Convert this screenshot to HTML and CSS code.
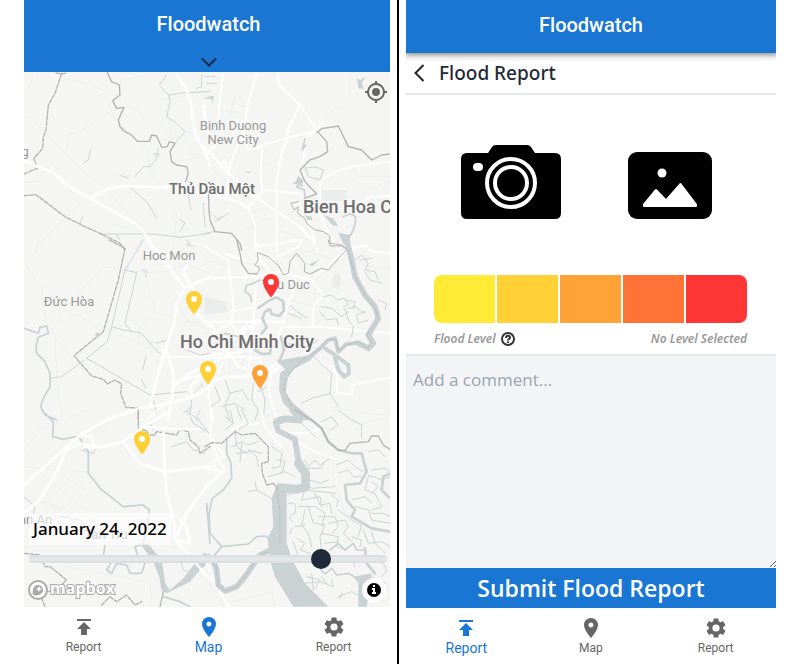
FILE: index.html
```html
<!DOCTYPE html>
<html lang="en">
<head>
<meta charset="utf-8">
<meta name="viewport" content="width=device-width, initial-scale=1">
<title>Floodwatch</title>
<link rel="stylesheet" href="styles.css">
</head>
<body>
<svg class="sprite" aria-hidden="true">
  <symbol id="i-upload" viewBox="0 0 24 24"><path d="M5 4v2h14V4H5zm0 10h4v6h6v-6h4l-7-7-7 7z"/></symbol>
  <symbol id="i-place" viewBox="0 0 24 24"><path d="M12 2C8.130 2 5 5.130 5 9c0 5.250 7 13 7 13s7-7.750 7-13c0-3.870-3.130-7-7-7zm0 9.500a2.500 2.500 0 1 1 0-5 2.500 2.500 0 0 1 0 5z"/></symbol>
  <symbol id="i-gear" viewBox="0 0 24 24"><path d="M19.140 12.940c.04-.3.06-.61.06-.94 0-.32-.02-.64-.07-.94l2.030-1.580a.49.49 0 0 0 .12-.61l-1.920-3.320a.49.49 0 0 0-.59-.22l-2.390.96a7 7 0 0 0-1.620-.94l-.36-2.540a.48.48 0 0 0-.48-.41h-3.840a.47.47 0 0 0-.47.41l-.36 2.540c-.59.24-1.130.57-1.620.94l-2.390-.96a.48.48 0 0 0-.59.22L2.740 8.870a.47.47 0 0 0 .12.61l2.030 1.580a6 6 0 0 0 0 1.880l-2.030 1.580a.49.49 0 0 0-.12.61l1.920 3.320c.12.22.37.29.59.22l2.390-.96c.5.38 1.030.7 1.620.94l.36 2.540c.05.24.24.41.48.41h3.840c.24 0 .44-.17.47-.41l.36-2.540a7 7 0 0 0 1.620-.94l2.390.96c.22.08.47 0 .59-.22l1.920-3.320a.47.47 0 0 0-.12-.61zM12 15.600a3.600 3.600 0 1 1 0-7.200 3.600 3.600 0 0 1 0 7.200z"/></symbol>
  <symbol id="pin" viewBox="0 0 16 24"><path d="M8 0a8 8 0 0 0-8 8c0 6 8 15.500 8 15.500S16 14 16 8a8 8 0 0 0-8-8z"/><circle cx="8" cy="8" r="3" fill="#fff"/></symbol>
</svg>
<main class="board">
  <section class="phone phone-map" aria-label="Map screen">
    <div class="screen">
      <header class="bar bar-tall">
        <h1>Floodwatch</h1>
        <button class="expand" type="button" aria-label="Expand"><svg viewBox="0 0 16 9"><path d="M1 1l7 7 7-7"/></svg></button>
      </header>
      <div class="map">
        <svg class="map-art" viewBox="21 72 375 535" preserveAspectRatio="xMidYMid slice" role="img" aria-label="Map of Ho Chi Minh City">
          <g transform="translate(20 70) scale(.3333)">
            <path class="minor" d="M12 140L40 150 110 225 200 315 240 335 370 485M12 337L50 335 75 300 140 235 145 192 175 188 270 125M195 40L255 62 285 150 340 200 385 240 385 285 440 390 470 430 460 540M400 8L300 35 320 105 380 140 515 230M210 385L170 410 50 530M500 270L570 255M515 265L570 220M12 80L30 50 40 8M130 25L195 40M440 95L460 250M430 90L570 60M250 440L270 460 335 475M350 462L370 500 350 540"/>
            <path class="creek" d="M440 15L418 45 445 75 450 95 440 140 470 160 495 185 465 220M445 75L490 68 570 65M415 235L410 265 390 290 370 290 345 320M400 250L420 255M300 315L325 325M330 350L345 365 380 395 410 445M240 492L400 492 480 502 570 490M180 465L187 440M478 448L495 458 480 485M505 375L512 420M550 400L555 470M500 520L520 530M190 280L205 270 212 240M290 495L300 510M545 15V50L530 55M560 85l12-4"/>
            <path class="edge" d="M262 8L275 35 298 45 300 75 278 92 290 115 312 112 295 150 300 170 315 185 335 195 352 214 388 214 395 195 410 198 425 232 442 230 448 215 465 220 450 245 455 275 470 285 500 290 505 310 497 335"/>
            <path class="edge dash" d="M125 10L105 70 85 105 78 180 70 200 68 235 42 265 52 295 12 312M108 8Q125 15 140 8M12 377L48 374 95 410 135 440 190 468 240 490 300 520 315 540"/>
            <path class="road" d="M12 272L100 308 140 345 210 385 280 425 350 462 385 505 405 540M210 385L265 355 310 348 450 353 568 375M470 15L495 50 512 90 518 150 530 200 555 245 570 290M550 110L560 170"/>
          </g>
          <g transform="translate(205 70) scale(.3333)">
            <rect x="345" y="360" width="80" height="32" fill="#ebecec"/>
            <path class="minor" d="M355 135L415 105 432 80 432 8M170 290L225 265M440 290L460 320 555 320M60 90L120 110M50 120L110 130M90 75L75 140M0 280L60 330 150 300M110 440L215 400M40 520L200 440M215 480L345 520M30 300L15 400M440 390L555 330"/>
            <path class="road2" d="M218 8L222 45 285 105 335 180 355 155M285 105L248 180 248 205 170 225 168 330 172 360M335 180L248 205 230 250 215 330 215 540M335 180L298 205 295 270M0 230L60 300 150 380 230 435 280 465 330 520M345 440L345 335 380 310 440 290 555 275M55 8L45 80 40 150 55 200 0 260M155 8L130 100 110 210 135 240 168 230M70 300L100 220M65 380L75 280M0 370L100 395 130 415 150 460 150 540M130 410L170 365M180 360L290 372M345 430L360 470 400 540M460 400L500 380 555 378M150 530L280 510M0 170L30 230M60 270L45 290 65 290 60 270M280 400L310 440 335 540M400 420L450 400"/>
            <path class="creek" d="M0 20h30M5 40h30M0 85L25 80 22 98M120 305L135 308M25 435L40 450 70 430M30 455L50 440M0 490L25 485M300 290L310 320 345 330 355 300 330 290 300 295"/>
            <path class="river" d="M268 340L290 335 275 350 298 360 300 382M300 205L292 240 302 225M415 440Q440 425 452 440 452 470 437 495"/>
            <path class="water" d="M356 435L385 445 400 468 383 466ZM400 488L437 495 430 532 415 522ZM300 435L320 440 322 450 308 450ZM280 318L294 330 292 350 270 340ZM456 25L466 30 482 20 470 40 477 57 460 55Z"/>
            <path class="water" d="M5 82L26 78 20 90Z"/>
            <path class="edge" d="M335 188L350 176 400 168 430 230 470 240 500 270 530 255 555 252 590 245M338 185L365 215 368 245 345 260 315 270 285 300 300 335 335 372 300 385M10 360L12 420 15 450 30 485 80 490 105 520 110 540"/>
            <path class="edge fine" d="M280 395L258 400 268 420 280 410 278 430 300 445 305 460 330 480 355 485 375 498 375 520 410 525 430 540"/>
          </g>
          <g transform="translate(20 240) scale(.3333)">
            <path class="minor" d="M12 65L65 145 68 200 80 250 105 285 110 400 125 540M12 360L80 300 130 210 250 80 375 97 440 95 500 75 570 100M130 210L270 270 430 345M12 70L50 35 55 0M355 310L360 260 410 215 465 235M410 215L385 150 375 95M110 300L160 360M390 310L460 300M470 250L570 240M470 190L500 240 570 270"/>
            <path class="creek" d="M370 0L315 90 275 260 262 305 200 355M190 362L125 410 92 415M200 355L390 465 500 455M315 90L350 98 315 250 335 275M275 260L310 270 365 280 390 310 420 340M378 350L368 390M365 420L378 445M410 310L440 300M400 480L410 520M500 20L510 10 500 0M490 520L515 500M520 460L550 430M365 90L378 90 378 110M500 330L540 345 570 340M515 480L510 520 535 540"/>
            <path class="river" d="M12 265L55 280 60 262 80 258 85 280 55 292 48 320 50 340 75 365 90 400 90 440 70 475 62 500 75 525 110 540"/>
            <path class="edge dash" d="M268 0L315 25 295 120 250 275 162 347 215 408 250 418 262 432 285 420 305 432 302 460 318 502 355 505 355 540"/>
            <circle cx="232" cy="284" r="6" fill="#c8d1d3"/>
            <path class="road" d="M385 0L435 65 495 145 470 190 465 240 435 335 415 400 390 500M495 145L570 110M440 335L460 400 460 440 445 540M460 440L510 400 570 370M270 540L360 505 450 490 520 470 570 440M500 75L490 100 520 150 530 220 570 260M425 330L440 330M460 430L520 410 570 400"/>
            <path class="road2" d="M380 540L460 470M455 350L570 350M520 470L510 440 545 410"/>
          </g>
          <g transform="translate(205 240) scale(.3333)">
            <path d="M0 170L60 185 70 215 0 225Z" class="built"/>
            <path d="M385 100L405 100 410 130 395 150 382 130Z" class="built"/>
            <path class="minor" d="M10 20L80 60 210 90M20 290L160 390M0 330L220 350M30 250L60 400M90 250L70 400M130 250L110 400M0 280L200 300M20 360L150 260M320 40L400 60M260 150L350 165 400 130M250 180L330 200M445 440L555 410M380 500L480 520 555 525M0 60L70 80M340 0L330 30 200 60M450 70L555 90M260 230L310 250M290 130L330 150 325 260"/>
            <path class="road2" d="M0 20L70 60 75 110 85 190 80 250M0 115L160 110 220 95M150 0L165 60 200 100 195 130M155 110L150 180 145 250M80 215L150 200 215 165M270 110L265 160 245 200 235 250 215 300M0 245H240M240 260L360 262 555 280M325 260L325 200 355 165 320 120 225 95M0 355L100 350 170 355M0 310L60 330 130 245 160 240M60 320L100 380 180 400M320 355L380 380 398 405 395 460 440 462 443 435 555 412M430 30L480 15 500 35 555 40M200 60L280 20 290 0M0 300L40 270 80 250M20 250L55 320M90 280L40 400M145 250L130 400M170 355L150 420M0 380L80 340 140 330M440 20L400 50 330 110M20 400L10 470 25 540M200 390L190 450 215 540M60 40L120 60M105 270L150 320M80 250L110 300 100 350"/>
            <path class="road" d="M0 430L60 412 190 405 240 370 320 345M190 385L215 372M0 350L50 340 90 290 150 250"/>
            <path class="creek" d="M440 65L470 45 490 70 480 90 510 95 520 120M465 60L500 55M480 95L495 120 530 130M355 170L380 165 395 180 420 175 430 195 415 200M420 180L450 185 445 205M350 200L380 205 410 230 430 215M345 215L365 240 395 235 400 255M420 205L430 240 445 260 440 290M520 180L545 190 540 210M480 215L455 225 460 250 490 240M430 205L450 200 480 220M250 220L290 235M260 200L275 215 310 235M320 345L380 400 375 460 320 475 290 490M375 460L400 500M340 300L310 320 240 310M30 440L45 480 20 500M60 420L75 460 60 500 75 540M75 460L110 450 130 480M95 500L110 540M145 430L140 480 160 510 150 540M160 455L185 440M165 430L180 480 175 540M50 500L90 490 120 510M325 70L340 62M340 90L320 100"/>
            <path class="river" d="M165 120L140 132 125 135 120 155 135 165 140 185M60 280L100 290"/>
            <path class="flow w8" d="M160 203L195 180 215 172 235 185 237 212 222 228 200 222 195 208 180 215 172 235 185 262 170 280M150 330L170 342 195 340 200 312M228 290L237 330 222 365"/>
            <path class="flow w17" d="M425 0L440 60 450 110 480 165 510 200 520 235 490 285 505 310 490 325 460 310"/>
            <path class="flow w12" d="M460 308L425 312 400 335 390 295 370 300 345 325 320 345M360 325L390 345 430 375 432 400 418 410 400 390 388 345"/>
            <path class="water" d="M215 362L300 348 335 340 315 362 270 385 248 410 242 460 265 490 325 540 272 540 260 515 235 490 222 450 225 400 240 388Z"/>
            <path class="water" d="M205 540Q230 520 270 530L310 540ZM310 75L335 62 325 78Z"/>
            <path class="edge" d="M95 0L105 40 110 70 130 100 155 102"/>
            <path class="edge fine" d="M155 102L165 85 150 75 160 60 157 38 190 50 212 70 220 75 235 105 250 100 255 65 275 40 300 70 298 95 315 102 350 85 370 90 400 55 425 30M370 0L375 18 410 18 425 28"/>
            <path class="edge dash thin" d="M430 30L450 110 480 165 515 215 518 240 485 285 500 310 485 325 460 305 425 315 400 332 393 300 370 298 340 330 300 355 260 390 235 440 260 500 310 540"/>
          </g>
          <g transform="translate(20 410) scale(.3333)">
            <path class="minor" d="M155 180L220 190 240 240M70 200L200 300M50 270L180 330M12 170L100 180 200 240M240 60L310 95M130 470L300 500 390 520 395 580M60 270L160 310 300 350M300 100L330 140M480 90L530 60 570 70M330 0L250 50 160 90M12 120L60 60 200 0"/>
            <path class="creek" d="M12 260L45 290 40 310M120 318L180 330 220 370M500 0L520 40 570 70M455 110L500 95 520 120 555 130M185 120L220 130 230 110M480 450L490 480 520 490M560 290L568 350M390 40L400 60M540 0L530 20 560 60M90 330L140 318"/>
            <path class="river" d="M65 0L100 35 98 80 130 88 175 78M180 85L205 125 205 190 240 235 310 290 370 285 388 300 385 330 370 400 345 410 355 445 375 460 365 490 330 490 320 465 290 460 275 490 260 480 275 455 250 440 255 405M430 560L480 575 510 590M560 280L570 400"/>
            <path class="water" d="M360 400L385 402 425 450 436 520 450 540 490 505 540 440 570 430 570 455 540 480 510 515 440 550 424 540 418 500 400 455Z"/>
            <path class="edge dash" d="M355 0L355 55 380 62 385 75 405 75 410 65 430 68 470 75 480 58 505 65 510 90 535 110 540 130 570 110M12 430L60 435 75 470 90 470 140 510 110 540 60 550 75 590M430 545L420 590"/>
            <path class="edge dash" d="M245 585L270 560 290 575 320 555 345 585 365 575"/>
            <path class="road" d="M12 225L180 75 260 30 340 0M12 310L60 270 110 185 140 120 180 100 240 112 310 95 370 50 440 10M310 95L360 160 435 185 570 170M435 185L430 70M435 185L440 250 465 350 465 390 520 450 570 510M570 215L500 310 470 380M465 390L510 400 500 350 480 330"/>
            <path class="road2" d="M370 50L480 58 540 58M180 75L215 80 225 115 190 110"/>
          </g>
          <g transform="translate(205 410) scale(.3333)">
            <path class="minor" d="M170 10L190 60 230 110 240 200M330 130L385 150 390 220 420 310 480 370 540 480M0 500L60 590M60 580L200 545 210 590M80 60L160 30 220 0M380 0L470 40 555 20M200 70L210 150 200 190"/>
            <path class="road2" d="M20 0L15 80 40 150 60 180 0 230M0 175L50 185M15 80L60 140 25 150 30 190M170 0L180 50 210 90 230 110M215 50L250 70 300 70 340 60M270 90L340 130 385 145M80 60L110 45 160 40M0 450L30 520 70 590"/>
            <path class="creek" d="M75 0L85 40 60 60M110 0L130 40 100 60M60 20L85 40M90 60L95 110 125 130M80 110L110 95 130 105 160 95M95 130L140 125 155 140 160 170M110 100L105 155M130 120L170 130M200 110L230 130 225 170 200 175M215 150L240 155 230 190M190 200L240 185 270 200M300 150L310 170 330 150 345 165 375 145M300 175L350 175 355 160M280 30L300 50 330 80M350 35L380 20 400 45 375 60M400 0L440 30 470 45 470 85M395 165L430 150 450 170 475 185M400 190L430 180 445 200 470 200M490 195L530 210 555 200M490 125L520 120 540 140M500 180L540 175 555 185"/>
            <path class="creek" d="M245 255L300 240 390 250M300 240L290 270 345 260 350 290M250 280Q280 270 270 310Q240 320 265 335M280 290L330 290 360 310 350 350M300 300L290 345 310 370 320 410M310 290L325 340 360 345 345 380 350 430M330 250L345 285 375 280 380 310M380 255L400 270 395 290M340 320L390 320 400 350 380 370M370 340L420 330 430 350 415 370 440 395M350 370L400 380 395 410 425 420M270 350L300 345M275 385L300 400 285 420 315 430M360 400L400 395M400 300L440 330 470 345 460 380M440 270L480 260 500 280M490 200L480 240 510 250 530 290 500 300M500 215L520 230 500 250M450 290L490 300 500 330 555 340M500 310L535 310 555 320M475 360L490 400 530 395 555 410M440 380L470 390 465 410M500 365L510 400 540 430M265 395L280 440 320 450 330 470M305 500L345 510 330 535M300 520L345 515 385 530 380 510M320 490L325 540M400 560L440 545 470 560M410 550L405 565M350 500L365 520M490 440L530 450 545 480 530 500M500 500L540 520M400 450L440 440 450 470M255 370L260 355M150 215L155 240 200 265M155 240L130 245M300 225L320 235 390 230M315 210L345 220 370 210"/>
            <path class="river" d="M65 90L65 130 78 160 80 205 55 240 22 265 12 310 15 370 50 410 130 402 155 380 180 378 200 390M50 410L25 440 0 455M345 430L348 480 360 492 380 475 395 495 430 490 465 510M375 420L400 400 420 420 445 400 455 420 480 420"/>
            <path class="flow w8" d="M265 0L320 30 350 55 370 95 400 120 440 130 470 130 485 185 465 220 420 225 425 270 450 300 440 320 500 355 555 365M555 265L530 240 535 200 555 190M480 415L485 460 510 490"/>
            <path class="flow w17" d="M262 0L285 32 245 28 212 38 220 62 270 88 280 150 303 190"/>
            <path class="flow w26" d="M280 160L302 190 302 232 275 238 225 233"/>
            <path class="water" d="M200 265L215 228 245 235 245 400 262 450 300 520 370 590 265 590 210 500 195 450 188 385 205 350ZM445 500L500 490 485 590 460 590 460 520Z"/>
            <path class="flow w17" d="M215 412L165 435 120 500 95 530 60 543 40 525 35 480 25 450 0 438"/>
            <path class="edge" d="M270 0L320 30 350 55 370 95 400 120 420 122 435 100 490 95 500 78 520 78 535 105 555 118"/>
            <path class="edge dash" d="M0 110L20 98 50 100 90 65 110 75 150 70 190 110 190 155 170 160 172 190 185 225 205 220 218 235"/>
            <path class="edge dash thin" d="M215 235L225 300V400M190 425L160 438 120 500 95 530 60 543 40 525 33 470 0 440"/>
          </g>
          <g class="labels">
            <text x="233" y="130">Binh Duong</text><text x="233" y="144">New City</text>
            <text class="town" x="212" y="194">Thủ Dầu Một</text>
            <text class="city" x="303" y="213" text-anchor="start">Bien Hoa City</text>
            <text x="169" y="260">Hoc Mon</text><text x="69" y="306">Đức Hòa</text>
            <text x="286" y="289">Thu Duc</text>
            <text class="city" x="247" y="348">Ho Chi Minh City</text>
            <text x="32" y="524">Tan An</text><text x="106" y="539">Tan Tru</text>
            <text x="18" y="156">ang</text>
          </g>
          <g>
            <use href="#pin" x="263" y="274" width="16" height="24" fill="#ff3636"/>
            <use href="#pin" x="186" y="291" width="16" height="24" fill="#ffd035"/>
            <use href="#pin" x="200" y="361" width="16" height="24" fill="#ffd035"/>
            <use href="#pin" x="252" y="365" width="16" height="24" fill="#ffa036"/>
            <use href="#pin" x="134" y="431" width="16" height="24" fill="#ffd035"/>
          </g>
        </svg>
        <button class="locate" type="button" aria-label="Find my location"><svg viewBox="0 0 24 24"><path d="M12 8a4 4 0 1 0 0 8 4 4 0 0 0 0-8zm8.940 3A9 9 0 0 0 13 3.060V1h-2v2.060A9 9 0 0 0 3.060 11H1v2h2.060A9 9 0 0 0 11 20.940V23h2v-2.060A9 9 0 0 0 20.940 13H23v-2h-2.060zM12 19a7 7 0 1 1 0-14 7 7 0 0 1 0 14z"/></svg></button>
        <div class="timeline">
          <label for="day">January 24, 2022</label>
          <input id="day" type="range" min="0" max="12" value="10">
        </div>
        <div class="credits">
          <a class="mapbox" href="#mapbox" aria-label="Mapbox">
            <svg viewBox="0 0 88 22">
              <circle cx="10" cy="11" r="9" fill="#fff" stroke="#aaa" stroke-width="2"/>
              <path d="M5 16c-1-4 0-7 2-9a5 5 0 0 1 7 7c-2 2-5 3-9 2z" fill="#aaa"/>
              <path d="M11 7l1 2 2 1-2 1-1 2-1-2-2-1 2-1z" fill="#fff"/>
              <text class="wordmark" x="22" y="15">mapbox</text>
            </svg>
          </a>
          <button class="info" type="button" aria-label="Map credits"><svg viewBox="0 0 24 24"><circle cx="12" cy="12" r="12" fill="#fff"/><circle cx="12" cy="12" r="7"/><path d="M11 8h2M10 11h2v4M10 15h4" stroke="#fff" stroke-width="2" fill="none"/></svg></button>
        </div>
      </div>
      <nav class="tabs">
        <a href="#report"><svg><use href="#i-upload"/></svg>Report</a>
        <a class="active" href="#map"><svg><use href="#i-place"/></svg>Map</a>
        <a href="#settings"><svg><use href="#i-gear"/></svg>Report</a>
      </nav>
    </div>
  </section>

  <div class="divider"></div>

  <section class="phone phone-report" aria-label="Report screen">
    <div class="screen">
      <header class="bar bar-raised"><h1>Floodwatch</h1></header>
      <div class="subhead">
        <button type="button" aria-label="Back"><svg viewBox="0 0 10 18"><path d="M9 1L1 9l8 8"/></svg></button>
        <h2>Flood Report</h2>
      </div>
      <form class="report">
        <div class="media">
          <button type="button" aria-label="Take a photo"><svg class="camera" viewBox="0 0 100 74">
            <path d="M6 8h21l4-6q1-2 4-2h31q3 0 4 2l4 6h20q6 0 6 6v54q0 6-6 6H6q-6 0-6-6V14q0-6 6-6z"/>
            <g fill="none" stroke="#fff" stroke-width="4"><circle cx="50" cy="38" r="24"/><circle cx="50" cy="38" r="16"/></g>
            <rect x="12" y="18" width="10" height="8" rx="4" fill="#fff"/></svg></button>
          <button type="button" aria-label="Choose a picture"><svg class="gallery" viewBox="0 0 84 67">
            <rect width="84" height="67" rx="9"/><circle cx="34" cy="21" r="4.500" fill="#fff"/>
            <path d="M16 52.500L28 38 38 48.500 52.500 32 68 52.500V54H16z" fill="#fff" stroke="#fff" stroke-width="2" stroke-linejoin="round"/></svg></button>
        </div>
        <div class="levels">
          <button class="l1" type="button" aria-label="Level 1"></button><button class="l2" type="button" aria-label="Level 2"></button><button class="l3" type="button" aria-label="Level 3"></button><button class="l4" type="button" aria-label="Level 4"></button><button class="l5" type="button" aria-label="Level 5"></button>
        </div>
        <div class="caption">
          <span>Flood Level</span>
          <button type="button" aria-label="About flood levels"><svg viewBox="0 0 14 14"><circle cx="7" cy="7" r="6"/><path d="M5 6c0-3 4-3 4-.5C9 7 7 7 7 8.500M7 9.500V11"/></svg></button>
          <output>No Level Selected</output>
        </div>
        <textarea aria-label="Comment" placeholder="Add a comment..."></textarea>
        <button class="submit" type="button">Submit Flood Report</button>
      </form>
      <nav class="tabs">
        <a class="active" href="#report"><svg><use href="#i-upload"/></svg>Report</a>
        <a href="#map"><svg><use href="#i-place"/></svg>Map</a>
        <a href="#settings"><svg><use href="#i-gear"/></svg>Report</a>
      </nav>
    </div>
  </section>
</main>
</body>
</html>
```
FILE: styles.css
```css
* { box-sizing: border-box; }
body { margin: 0; background: #fff; font-family: "Noto Sans", "Open Sans", sans-serif; color: #1f2937; }
h1, h2 { margin: 0; }
button { margin: 0; padding: 0; border: 0; background: none; font: inherit; color: inherit; display: block; }
svg { display: block; }
.sprite { position: absolute; width: 0; height: 0; }

.board { display: grid; grid-template-columns: 366fr 2px 370fr; min-height: 100vh; padding: 0 24px; }
.phone { display: flex; overflow: hidden; }
.phone-map { padding-bottom: 1px; }
.divider { background: #000; }
.board { column-gap: 7px; }
.screen { flex: 1; min-width: 0; display: flex; flex-direction: column; }
.phone-map .screen { margin: 0 -6px 0 -3px; }
.phone-report .screen { margin: 0 -2px; }

.bar { background: #1976d2; color: #fff; text-align: center; flex: none; }
.bar h1 { font: 500 20px/48px Roboto, sans-serif; }
.bar-tall { height: 72px; }
.bar-raised { height: 53px; padding-top: 1px; position: relative; box-shadow: 0 2px 4px -1px rgba(0,0,0,.3), 0 4px 5px rgba(0,0,0,.14), 0 1px 10px rgba(0,0,0,.12); }
.expand { margin: 9px auto 0; }
.expand svg { width: 16px; height: 10px; fill: none; stroke: #102a43; stroke-width: 2; }

.map { flex: 1; position: relative; overflow: hidden; background: #f5f5f4; min-height: 400px; }
.map-art { position: absolute; inset: 0; width: 100%; height: 100%; }
.map-art path { fill: none; stroke-linejoin: round; stroke-linecap: round; }
.map-art .minor { stroke: #edf0f0; stroke-width: 3; }
.map-art .road { stroke: #fff; stroke-width: 8; }
.map-art .road2 { stroke: #fff; stroke-width: 6; }
.map-art .creek { stroke: #ccd4d6; stroke-width: 3; }
.map-art .river { stroke: #c8d1d3; stroke-width: 5; }
.map-art .flow { stroke: #cad2d3; }
.map-art .w8 { stroke-width: 8; }
.map-art .w12 { stroke-width: 12; }
.map-art .w17 { stroke-width: 17; }
.map-art .w26 { stroke-width: 26; }
.map-art .water { fill: #cad2d3; }
.map-art .built { fill: #ebecec; }
.map-art .edge { stroke: #b3b3b3; stroke-width: 4; }
.map-art .dash { stroke-dasharray: 12 5; }
.map-art .fine { stroke-width: 3; }
.map-art .thin { stroke-width: 2; }
.labels { font: 400 13px Roboto, sans-serif; fill: #999; text-anchor: middle; paint-order: stroke; stroke: #f5f5f4; stroke-width: 2px; }
.labels .town { font-size: 15px; fill: #6e6e6e; font-weight: 500; }
.labels .city { font-size: 18px; fill: #6e6e6e; font-weight: 500; }
.labels .city[text-anchor] { text-anchor: start; }

.locate { position: absolute; top: 8px; right: 8px; }
.locate svg { width: 24px; height: 24px; fill: #666; }
.timeline { position: absolute; left: 8px; right: 9px; bottom: 38px; display: flex; flex-direction: column; align-items: flex-start; }
.timeline label { background: rgba(255,255,255,.6); padding: 4px; font-size: 17px; line-height: 24px; font-weight: 500; color: #000; }
.timeline input { appearance: none; -webkit-appearance: none; width: 100%; height: 20px; margin: 4px 0 0; background: none; }
.timeline input::-webkit-slider-runnable-track { height: 8px; border-radius: 4px; background: #e4e7e9; border: 0 solid #dbdfe0; border-width: 2px 0; }
.timeline input::-webkit-slider-thumb { -webkit-appearance: none; width: 20px; height: 20px; margin-top: -8px; border-radius: 50%; background: #1f2937; }
.credits { position: absolute; left: 7px; right: 10px; bottom: 5px; display: flex; align-items: center; justify-content: space-between; }
.mapbox svg { width: 88px; height: 22px; }
.wordmark { font: 700 16px "Open Sans", sans-serif; fill: #fff; stroke: #aaa; stroke-width: 2px; paint-order: stroke; }
.info svg { width: 24px; height: 24px; }

.tabs { flex: none; display: grid; grid-template-columns: repeat(3, 1fr); height: 56px; background: #fff; }
.tabs a { display: flex; flex-direction: column; align-items: center; justify-content: center; color: #666; text-decoration: none; font: 400 12px/16px Roboto, sans-serif; }
.tabs svg { width: 24px; height: 24px; fill: currentColor; }
.tabs a.active { color: #1976d2; font-size: 14px; }

.subhead { display: flex; align-items: center; gap: 14px; height: 42px; padding-left: 10px; border-bottom: 2px solid #e5e7eb; flex: none; }
.subhead svg { width: 11px; height: 18px; fill: none; stroke: #222; stroke-width: 2; }
.subhead h2 { font-size: 19px; line-height: 28px; font-weight: 500; }
.report { flex: 1; display: flex; flex-direction: column; }
.media { display: flex; align-items: flex-end; justify-content: center; gap: 67px; height: 180px; padding-bottom: 56px; padding-right: 9px; }
.camera { width: 100px; height: 74px; }
.gallery { width: 84px; height: 67px; }
.levels { display: grid; grid-template-columns: repeat(5, 1fr); gap: 2px; height: 48px; margin: 0 31px 0 30px; border-radius: 8px; overflow: hidden; }
.l1 { background: #ffea35; }
.l2 { background: #ffd136; }
.l3 { background: #ffa336; }
.l4 { background: #ff7336; }
.l5 { background: #ff3636; }
.caption { display: flex; align-items: center; gap: 5px; height: 31px; margin: 0 31px 0 30px; font-size: 12px; font-weight: 600; font-style: italic; color: #999; }
.caption output { margin-left: auto; }
.caption svg { width: 14px; height: 14px; fill: none; stroke: #333; stroke-width: 2; }
.report textarea { flex: 1; width: 100%; min-height: 100px; margin: 0; padding: 10px 9px; border: 0; border-top: 2px solid #e5e7eb; background: #f3f4f6; border-radius: 0; font: 400 17px/28px "Open Sans", sans-serif; color: #1f2937; }
.report textarea::placeholder { color: #9ca3af; }
.submit { height: 40px; background: #1976d2; color: #fff; font: 600 23px/40px "Open Sans", sans-serif; text-align: center; }
```
